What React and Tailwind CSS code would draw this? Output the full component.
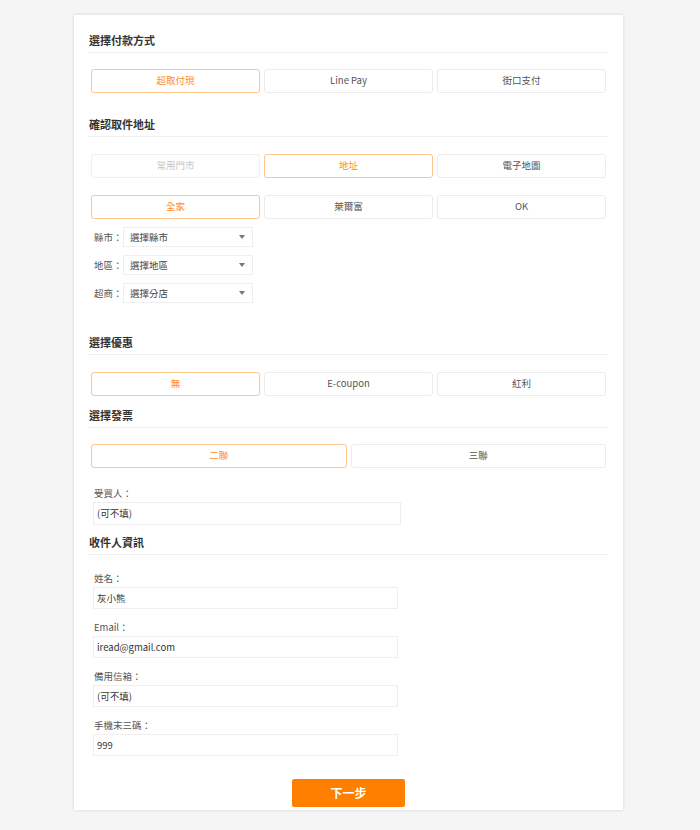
import React, { useState } from 'react'

const font = { fontFamily: '"Noto Sans CJK TC", "Noto Sans", sans-serif' }

const Heading = ({ children, className = '' }) => (
  <div className={`border-b border-[#efefef] pb-[4px] text-[11px] leading-[16px] font-bold text-[#333] ${className}`}>
    {children}
  </div>
)

const OptionButton = ({ label, active, muted, onClick }) => (
  <button
    type="button"
    onClick={onClick}
    className={`h-[24px] rounded-[3px] border text-[9.5px] leading-none ${
      active
        ? 'border-[#ffc58f] text-[#ff8a2b]'
        : muted
        ? 'border-[#f0f0f0] text-[#c4c4c4]'
        : 'border-[#ececec] text-[#555]'
    } bg-white`}
  >
    {label}
  </button>
)

const OptionRow = ({ items, cols = 3, className = '' }) => {
  const [active, setActive] = useState(items.findIndex((i) => i.active))
  return (
    <div className={`grid ${cols === 3 ? 'grid-cols-3 gap-[4px]' : 'grid-cols-2 gap-[4px]'} px-[2px] ${className}`}>
      {items.map((item, i) => (
        <OptionButton
          key={item.label}
          label={item.label}
          muted={item.muted}
          active={i === active}
          onClick={() => setActive(i)}
        />
      ))}
    </div>
  )
}

const SelectRow = ({ label, value, className = '' }) => (
  <div className={`flex items-center pl-[5px] ${className}`}>
    <span className="w-[29px] shrink-0 whitespace-nowrap text-[9.5px] text-[#555]">{label}</span>
    <div className="flex h-[20px] w-[130px] items-center justify-between border border-[#efefef] pl-[6px] pr-[7px] text-[9.5px] text-[#444]">
      <span>{value}</span>
      <svg width="6" height="4" viewBox="0 0 6 4">
        <path d="M0 0 L6 0 L3 4 Z" fill="#777" />
      </svg>
    </div>
  </div>
)

const Field = ({ label, value, className = '', width = 'w-[305px]', h = 'h-[22px]' }) => (
  <div className={className}>
    <div className="pl-[5px] text-[9.5px] leading-[14px] text-[#555]">{label}</div>
    <div className={`mt-[2px] ml-[4px] flex ${h} ${width} items-center border border-[#efefef] px-[3px] text-[9.5px] text-[#333]`}>
      {value}
    </div>
  </div>
)

export default function App() {
  return (
    <div className="min-h-[830px] bg-[#f5f5f5] pt-[15px]" style={font}>
      <div className="ml-[74px] w-[549px] bg-white px-[15px] pt-[17px] pb-[3px] shadow-[0_0_3px_rgba(0,0,0,0.15)]">
        <Heading>選擇付款方式</Heading>
        <OptionRow
          className="mt-[16px]"
          items={[{ label: '超取付現', active: true }, { label: 'Line Pay' }, { label: '街口支付' }]}
        />

        <Heading className="mt-[23px]">確認取件地址</Heading>
        <OptionRow
          className="mt-[17px]"
          items={[{ label: '常用門市', muted: true }, { label: '地址', active: true }, { label: '電子地圖' }]}
        />
        <OptionRow
          className="mt-[17px]"
          items={[{ label: '全家', active: true }, { label: '萊爾富' }, { label: 'OK' }]}
        />
        <SelectRow className="mt-[8px]" label="縣市：" value="選擇縣市" />
        <SelectRow className="mt-[8px]" label="地區：" value="選擇地區" />
        <SelectRow className="mt-[8px]" label="超商：" value="選擇分店" />

        <Heading className="mt-[31px]">選擇優惠</Heading>
        <OptionRow
          className="mt-[17px]"
          items={[{ label: '無', active: true }, { label: 'E-coupon' }, { label: '紅利' }]}
        />

        <Heading className="mt-[11px]">選擇發票</Heading>
        <OptionRow
          cols={2}
          className="mt-[16px]"
          items={[{ label: '二聯', active: true }, { label: '三聯' }]}
        />
        <Field className="mt-[18px]" label="受買人：" value="(可不填)" width="w-[308px]" h="h-[23px]" />

        <Heading className="mt-[9px]">收件人資訊</Heading>
        <Field className="mt-[16px]" label="姓名：" value="灰小熊" />
        <Field className="mt-[11px]" label="Email：" value="iread@gmail.com" />
        <Field className="mt-[11px]" label="備用信箱：" value="(可不填)" />
        <Field className="mt-[11px]" label="手機末三碼：" value="999" />

        <div className="mt-[23px] flex justify-center">
          <button
            type="button"
            className="h-[28px] w-[113px] rounded-[2px] bg-[#ff7f00] text-[12px] font-bold text-white"
          >
            下一步
          </button>
        </div>
      </div>
    </div>
  )
}
